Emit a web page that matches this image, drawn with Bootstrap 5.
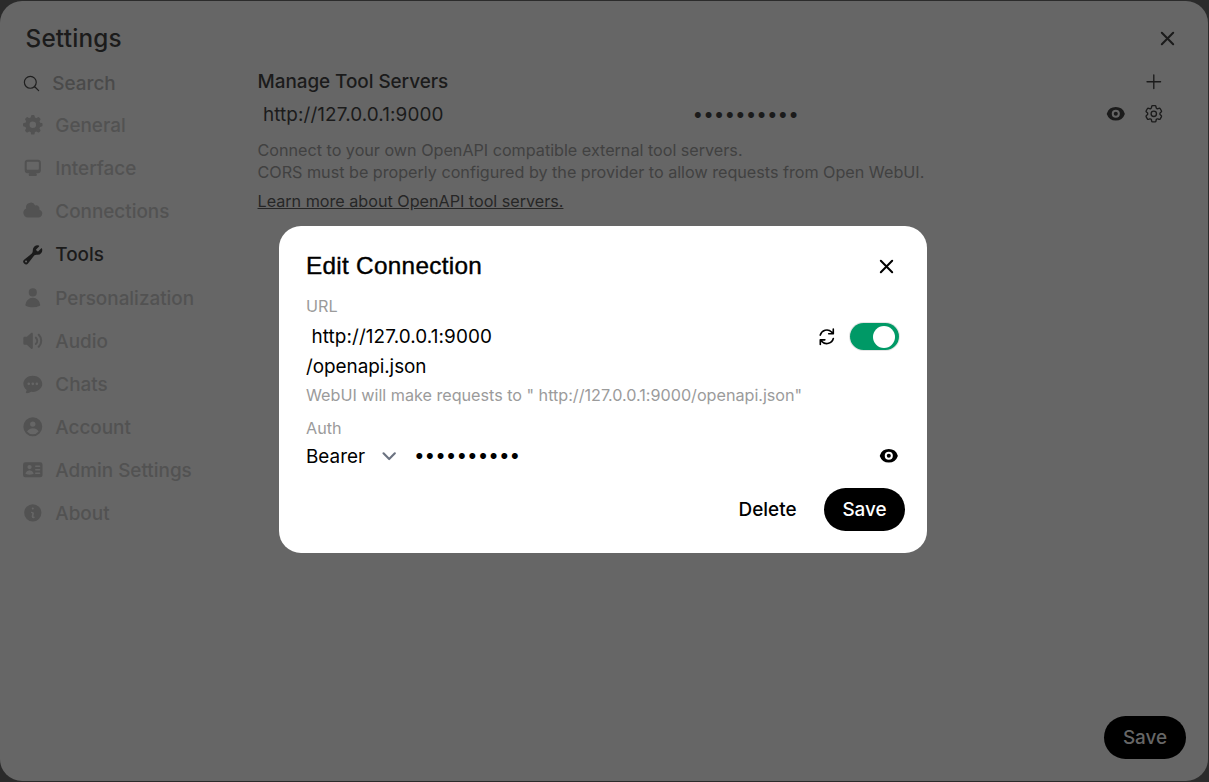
<!DOCTYPE html>
<html lang="en">
<head>
<meta charset="utf-8">
<title>Settings</title>
<link href="https://cdn.jsdelivr.net/npm/bootstrap@5.3.0/dist/css/bootstrap.min.css" rel="stylesheet">
<style>
body{font-family:Inter,"Liberation Sans",sans-serif;font-size:18.9px;line-height:27px;background:#2b2b2b;color:#1b1b1b;height:782px;overflow:hidden}
button{border:0;background:none;padding:0;color:inherit;line-height:inherit}
svg{display:block;width:21.6px;height:21.6px;flex:none;fill:currentColor}
.line-ico{fill:none;stroke:currentColor;stroke-width:1.5;stroke-linecap:round;stroke-linejoin:round}
.x-ico{width:27px;height:27px}
.panel{width:1208px;height:780px;margin-top:1px;background:#666;border-radius:22px;padding:0 22px 22px}
.panel-head{height:62px;padding:0 5px 0 3.5px}
.panel-head h1{font-size:24.3px;font-weight:500;padding-top:14px;letter-spacing:.2px}
.panel-head button{padding-top:12px}
.side{width:235.5px}
.side .search-row{height:41px;gap:11.3px;color:#1f1f1f}
.side .search-row svg{width:19px;height:19px}
.side .search-row span{color:#4a4a4a;font-weight:500}
.tab-link{height:43.13px;gap:11.7px;color:#525252;font-weight:500}
.tab-link svg{margin-bottom:1.2px}
.tab-link.on{color:#1b1b1b}
.servers{padding-right:21px;padding-top:5px}
.servers h2{font-size:18.9px;font-weight:500;line-height:27px;letter-spacing:-.04px}
.servers-row{height:33px;margin-top:3px}
.servers-row svg{margin-bottom:1px}
.url-cell{width:435px;white-space:pre}
.url-text{letter-spacing:.1px;white-space:pre}
.pass{border:0;outline:0;background:none;padding:0 0 3px;font:inherit;color:inherit;min-width:0}
.note{font-size:16.2px;line-height:21.6px;color:#414141;letter-spacing:-.02px}
.note a{color:#262626}
.pill{width:82px;height:43px;border-radius:22px;background:#000;color:#fff;font-weight:500}
.pill.dim{color:#666}
.veil{position:absolute;inset:0;padding:226px 0 0 279px}
.sheet{width:648px;height:327px;background:#fff;border-radius:22px;color:#000;padding:0 22px 22px 27px}
.sheet h2{font-family:"Liberation Sans",sans-serif;font-size:24.3px;font-weight:400;-webkit-text-stroke:.4px #000;line-height:30px;letter-spacing:.3px}
.small-label{font-size:16.2px;line-height:22px;color:#9b9b9b;letter-spacing:-.02px}
.toggle{width:49px;height:27px;border-radius:14px;background:#096;padding:3px 4px;box-shadow:0 0 0 1px #e5e5e5}
.toggle i{display:block;width:22px;height:22px;border-radius:50%;background:#fff}
</style>
<script src="https://cdn.jsdelivr.net/npm/bootstrap@5.3.0/dist/js/bootstrap.bundle.min.js"></script>
</head>
<body>
<div class="panel d-flex flex-column">
  <header class="panel-head d-flex justify-content-between align-items-center">
    <h1 class="m-0">Settings</h1>
    <button aria-label="Close"><svg class="line-ico x-ico" viewBox="0 0 20 20"><path d="M5.8 5.8l8.4 8.4M14.2 5.8l-8.4 8.4"/></svg></button>
  </header>
  <div class="d-flex flex-grow-1">
    <nav class="side d-flex flex-column">
      <div class="search-row d-flex align-items-center"><svg class="line-ico" viewBox="0 0 24 24"><path d="M21 21l-5.197-5.197m0 0A7.5 7.5 0 105.196 5.196a7.5 7.5 0 0010.607 10.607z"/></svg><span>Search</span></div>
      <div class="tab-link d-flex align-items-center"><svg viewBox="0 0 20 20"><path fill-rule="evenodd" d="M8.34 1.804A1 1 0 0 1 9.32 1h1.36a1 1 0 0 1 .98.804l.295 1.473c.497.144.971.342 1.416.587l1.25-.834a1 1 0 0 1 1.262.125l.962.962a1 1 0 0 1 .125 1.262l-.834 1.25c.245.445.443.919.587 1.416l1.473.294a1 1 0 0 1 .804.98v1.361a1 1 0 0 1-.804.98l-1.473.295a6.95 6.95 0 0 1-.587 1.416l.834 1.25a1 1 0 0 1-.125 1.262l-.962.962a1 1 0 0 1-1.262.125l-1.25-.834a6.953 6.953 0 0 1-1.416.587l-.294 1.473a1 1 0 0 1-.98.804H9.32a1 1 0 0 1-.98-.804l-.295-1.473a6.957 6.957 0 0 1-1.416-.587l-1.25.834a1 1 0 0 1-1.262-.125l-.962-.962a1 1 0 0 1-.125-1.262l.834-1.25a6.957 6.957 0 0 1-.587-1.416l-1.473-.294A1 1 0 0 1 1 10.68V9.32a1 1 0 0 1 .804-.98l1.473-.295c.144-.497.342-.971.587-1.416l-.834-1.25a1 1 0 0 1 .125-1.262l.962-.962A1 1 0 0 1 5.38 3.03l1.25.834a6.957 6.957 0 0 1 1.416-.587l.294-1.473ZM13 10a3 3 0 1 1-6 0 3 3 0 0 1 6 0Z"/></svg><span>General</span></div>
      <div class="tab-link d-flex align-items-center"><svg viewBox="0 0 16 16"><path fill-rule="evenodd" d="M2 4.25A2.25 2.25 0 0 1 4.25 2h7.5A2.25 2.25 0 0 1 14 4.25v5.5A2.25 2.25 0 0 1 11.75 12h-1.312c.1.128.21.248.328.36a.75.75 0 0 1 .234.545v.345a.75.75 0 0 1-.75.75h-4.5a.75.75 0 0 1-.75-.75v-.345a.75.75 0 0 1 .234-.545c.118-.111.228-.232.328-.36H4.25A2.25 2.25 0 0 1 2 9.75v-5.5Zm2.25-.75a.75.75 0 0 0-.75.75v4.5c0 .414.336.75.75.75h7.5a.75.75 0 0 0 .75-.75v-4.5a.75.75 0 0 0-.75-.75h-7.5Z"/></svg><span>Interface</span></div>
      <div class="tab-link d-flex align-items-center"><svg viewBox="0 0 16 16"><path d="M1 9.5A3.5 3.5 0 0 0 4.5 13H12a3 3 0 0 0 .917-5.857 2.503 2.503 0 0 0-3.198-3.019 3.5 3.5 0 0 0-6.628 2.171A3.5 3.5 0 0 0 1 9.5Z"/></svg><span>Connections</span></div>
      <div class="tab-link on d-flex align-items-center"><svg viewBox="0 0 16 16"><path fill-rule="evenodd" d="M11.5 8a3.5 3.5 0 0 0 3.362-4.476c-.094-.325-.497-.39-.736-.152L12.099 5.4a.48.48 0 0 1-.653.033 8.554 8.554 0 0 1-.879-.879.48.48 0 0 1 .033-.653l2.027-2.028c.238-.238.173-.642-.152-.736a3.502 3.502 0 0 0-4.476 3.427c.018.99-.133 2.093-.914 2.7l-5.31 4.13a2.015 2.015 0 1 0 2.828 2.827l4.13-5.309c.607-.78 1.71-.932 2.7-.914L11.5 8ZM3 13.75a.75.75 0 1 0 0-1.5.75.75 0 0 0 0 1.5Z"/></svg><span>Tools</span></div>
      <div class="tab-link d-flex align-items-center"><svg viewBox="0 0 24 24"><path d="M7.5 6a4.5 4.5 0 1 1 9 0 4.5 4.5 0 0 1-9 0ZM3.751 20.105a8.25 8.25 0 0 1 16.498 0 .75.75 0 0 1-.437.695A18.683 18.683 0 0 1 12 22.5c-2.786 0-5.433-.608-7.812-1.7a.75.75 0 0 1-.437-.695Z"/></svg><span>Personalization</span></div>
      <div class="tab-link d-flex align-items-center"><svg viewBox="0 0 16 16"><path d="M7.557 2.066A.75.75 0 0 1 8 2.75v10.5a.75.75 0 0 1-1.248.56L3.59 11H2a1 1 0 0 1-1-1V6a1 1 0 0 1 1-1h1.59l3.162-2.81a.75.75 0 0 1 .805-.124ZM12.95 3.05a.75.75 0 1 0-1.06 1.06 5.5 5.5 0 0 1 0 7.78.75.75 0 1 0 1.06 1.06 7 7 0 0 0 0-9.9Z"/><path d="M10.828 5.172a.75.75 0 1 0-1.06 1.06 2.5 2.5 0 0 1 0 3.536.75.75 0 1 0 1.06 1.06 4 4 0 0 0 0-5.656Z"/></svg><span>Audio</span></div>
      <div class="tab-link d-flex align-items-center"><svg viewBox="0 0 16 16"><path fill-rule="evenodd" d="M8 2C4.262 2 1 4.57 1 8c0 1.86.98 3.486 2.455 4.566a3.472 3.472 0 0 1-.469 1.26.75.75 0 0 0 .713 1.14 6.961 6.961 0 0 0 3.06-1.06c.403.062.818.094 1.241.094 3.738 0 7-2.57 7-6s-3.262-6-7-6ZM5 9a1 1 0 1 0 0-2 1 1 0 0 0 0 2Zm7-1a1 1 0 1 1-2 0 1 1 0 0 1 2 0ZM8 9a1 1 0 1 0 0-2 1 1 0 0 0 0 2Z"/></svg><span>Chats</span></div>
      <div class="tab-link d-flex align-items-center"><svg viewBox="0 0 16 16"><path fill-rule="evenodd" d="M15 8A7 7 0 1 1 1 8a7 7 0 0 1 14 0Zm-5-2a2 2 0 1 1-4 0 2 2 0 0 1 4 0ZM8 9c-1.825 0-3.422.977-4.295 2.437A5.49 5.49 0 0 0 8 13.5a5.49 5.49 0 0 0 4.294-2.063A4.997 4.997 0 0 0 8 9Z"/></svg><span>Account</span></div>
      <div class="tab-link d-flex align-items-center"><svg viewBox="0 0 20 20"><path fill-rule="evenodd" d="M1 5a2 2 0 0 1 2-2h14a2 2 0 0 1 2 2v10a2 2 0 0 1-2 2H3a2 2 0 0 1-2-2V5Zm4 2.500a2 2 0 1 1 4 0 2 2 0 0 1-4 0Zm2 3a4 4 0 0 0-3.665 2.395.75.75 0 0 0 .416 1A8.980 8.980 0 0 0 7 14.500a8.980 8.980 0 0 0 3.249-.604.75.75 0 0 0 .416-1.001A4.001 4.001 0 0 0 7 10.500Zm5-3.750a.75.75 0 0 1 .75-.75h3.500a.75.75 0 0 1 0 1.500h-3.500a.75.75 0 0 1-.75-.75Zm0 6.500a.75.75 0 0 1 .75-.75h3.500a.75.75 0 0 1 0 1.500h-3.500a.75.75 0 0 1-.75-.75Zm.75-4a.75.75 0 0 0 0 1.500h3.500a.75.75 0 0 0 0-1.500h-3.500Z"/></svg><span>Admin Settings</span></div>
      <div class="tab-link d-flex align-items-center"><svg viewBox="0 0 20 20"><path fill-rule="evenodd" d="M18 10a8 8 0 11-16 0 8 8 0 0116 0zm-7-4a1 1 0 11-2 0 1 1 0 012 0zM9 9a.75.75 0 000 1.5h.253a.25.25 0 01.244.304l-.459 2.066A1.75 1.75 0 0010.747 15H11a.75.75 0 000-1.500h-.253a.25.25 0 01-.244-.304l.459-2.066A1.75 1.75 0 009.253 9H9z"/></svg><span>About</span></div>
    </nav>
    <main class="d-flex flex-column flex-grow-1">
      <section class="servers">
        <div class="d-flex justify-content-between align-items-center">
          <h2 class="m-0">Manage Tool Servers</h2>
          <button aria-label="Add"><svg class="line-ico" viewBox="0 0 24 24"><path d="M12 4.500v15m7.500-7.500h-15"/></svg></button>
        </div>
        <div class="servers-row d-flex align-items-center">
          <span class="url-cell url-text"> http://127.0.0.1:9000</span>
          <input class="pass flex-grow-1" type="password" value="0123456789" aria-label="API key" readonly>
          <button aria-label="Show" style="margin-right:17px"><svg viewBox="0 0 16 16"><path d="M8 9.500a1.500 1.500 0 1 0 0-3 1.500 1.500 0 0 0 0 3Z"/><path fill-rule="evenodd" d="M1.380 8.280a.87.87 0 0 1 0-.566 7.003 7.003 0 0 1 13.238.006.87.87 0 0 1 0 .566A7.003 7.003 0 0 1 1.379 8.280ZM11 8a3 3 0 1 1-6 0 3 3 0 0 1 6 0Z"/></svg></button>
          <button aria-label="Configure"><svg class="line-ico" viewBox="0 0 24 24"><path d="M9.594 3.940c.09-.542.56-.94 1.110-.94h2.593c.55 0 1.020.398 1.110.94l.213 1.281c.063.374.313.686.645.87.074.04.147.083.22.127.325.196.72.257 1.075.124l1.217-.456a1.125 1.125 0 0 1 1.370.49l1.296 2.247a1.125 1.125 0 0 1-.26 1.431l-1.003.827c-.293.241-.438.613-.43.992a7.723 7.723 0 0 1 0 .255c-.008.378.137.75.43.991l1.004.827c.424.35.534.955.26 1.430l-1.298 2.247a1.125 1.125 0 0 1-1.369.491l-1.217-.456c-.355-.133-.75-.072-1.076.124a6.470 6.470 0 0 1-.22.128c-.331.183-.581.495-.644.869l-.213 1.281c-.09.543-.56.94-1.110.94h-2.594c-.55 0-1.019-.398-1.110-.94l-.213-1.281c-.062-.374-.312-.686-.644-.87a6.520 6.520 0 0 1-.22-.127c-.325-.196-.72-.257-1.076-.124l-1.217.456a1.125 1.125 0 0 1-1.369-.49l-1.297-2.247a1.125 1.125 0 0 1 .26-1.431l1.004-.827c.292-.24.437-.613.43-.991a6.932 6.932 0 0 1 0-.255c.007-.38-.138-.751-.43-.992l-1.004-.827a1.125 1.125 0 0 1-.26-1.430l1.297-2.247a1.125 1.125 0 0 1 1.370-.491l1.216.456c.356.133.751.072 1.076-.124.072-.044.146-.086.22-.128.332-.183.582-.495.644-.869l.214-1.280Z"/><path d="M15 12a3 3 0 1 1-6 0 3 3 0 0 1 6 0Z"/></svg></button>
        </div>
        <div class="note" style="margin-top:9px">Connect to your own OpenAPI compatible external tool servers.<br>CORS must be properly configured by the provider to allow requests from Open WebUI.</div>
        <div class="note" style="margin-top:8px"><a href="#">Learn more about OpenAPI tool servers.</a></div>
      </section>
      <button class="pill dim mt-auto ms-auto">Save</button>
    </main>
  </div>
</div>

<div class="veil">
  <div class="sheet d-flex flex-column" role="dialog" aria-label="Edit Connection">
    <div class="d-flex justify-content-between align-items-center" style="padding:25px 5px 0 0">
      <h2 class="m-0">Edit Connection</h2>
      <button aria-label="Close"><svg class="line-ico x-ico" viewBox="0 0 20 20"><path d="M5.800 5.800l8.400 8.400M14.200 5.800l-8.400 8.400"/></svg></button>
    </div>
    <div class="small-label" style="margin-top:14px">URL</div>
    <div class="d-flex align-items-center" style="height:30px;margin-top:4px;padding-right:6px">
      <span class="flex-grow-1 url-text"> http://127.0.0.1:9000</span>
      <button aria-label="Verify"><svg style="margin-top:1px" viewBox="0 0 20 20"><path d="M15.312 11.424a5.500 5.500 0 01-9.201 2.466l-.312-.311h2.433a.75.75 0 000-1.500H3.989a.75.75 0 00-.75.75v4.242a.75.75 0 001.500 0v-2.430l.31.31a7 7 0 0011.712-3.138.75.75 0 00-1.449-.39zm1.230-3.723a.75.75 0 00.219-.53V2.929a.75.75 0 00-1.500 0V5.360l-.31-.31A7 7 0 003.239 8.188a.75.75 0 101.448.389A5.500 5.500 0 0113.890 6.110l.311.31h-2.432a.75.75 0 000 1.500h4.243a.75.75 0 00.53-.219z"/></svg></button>
      <div class="toggle d-flex justify-content-end" style="margin-left:12.500px"><i></i></div>
    </div>
    <div style="height:30px;line-height:32px;letter-spacing:-.05px">/openapi.json</div>
    <div class="small-label" style="margin-top:3px">WebUI will make requests to " http://127.0.0.1:9000/openapi.json"</div>
    <div class="small-label" style="margin-top:11px">Auth</div>
    <div class="d-flex align-items-center" style="height:30px;margin-top:2px;padding-right:5px">
      <span>Bearer</span>
      <svg class="line-ico" style="width:28.350px;height:28.350px;margin-left:10px;margin-right:10.500px;color:#6b7280" viewBox="0 0 20 20"><path d="M6 8l4 4 4-4"/></svg>
      <input class="pass flex-grow-1" type="password" value="0123456789" aria-label="API key" readonly>
      <button aria-label="Show"><svg viewBox="0 0 16 16"><path d="M8 9.500a1.500 1.500 0 1 0 0-3 1.500 1.500 0 0 0 0 3Z"/><path fill-rule="evenodd" d="M1.380 8.280a.87.87 0 0 1 0-.566 7.003 7.003 0 0 1 13.238.006.87.87 0 0 1 0 .566A7.003 7.003 0 0 1 1.379 8.280ZM11 8a3 3 0 1 1-6 0 3 3 0 0 1 6 0Z"/></svg></button>
    </div>
    <div class="d-flex align-items-center justify-content-end mt-auto">
      <button class="fw-medium" style="margin-right:27.500px;font-weight:500">Delete</button>
      <button class="pill" style="width:81px">Save</button>
    </div>
  </div>
</div>
</body>
</html>
